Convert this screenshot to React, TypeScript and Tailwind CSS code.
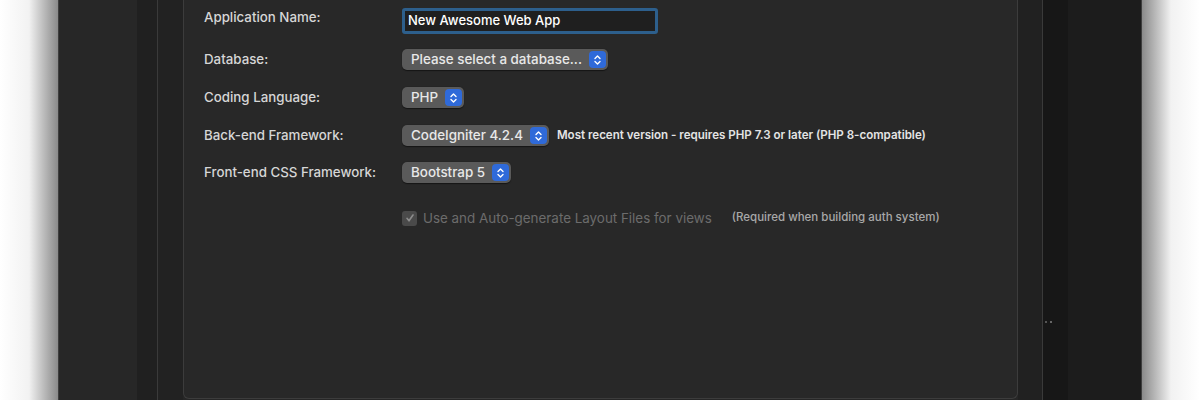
import React from 'react';

const font = { fontFamily: 'Inter, "Liberation Sans", Arial, sans-serif' };

const Chevrons = () => (
  <svg width="9" height="12" viewBox="0 0 9 12" fill="none" stroke="white" strokeWidth="1.4" strokeLinecap="round" strokeLinejoin="round">
    <path d="M2 4.5 L4.5 2 L7 4.5" />
    <path d="M2 7.5 L4.5 10 L7 7.5" />
  </svg>
);

const Select = ({ value }: { value: string }) => (
  <div className="flex h-[21px] items-center rounded-[5px] bg-[#5a5a5a] pl-[9px] pr-[2px] shadow-[0_0.5px_1px_rgba(0,0,0,0.5)]">
    <span className="text-[13.4px] font-medium leading-none text-[#e8e8e8]">{value}</span>
    <span className="ml-[7px] flex h-[17px] w-[17px] items-center justify-center rounded-[4px] bg-[#2f6ad9]">
      <Chevrons />
    </span>
  </div>
);

const Row = ({ label, children, className = '' }: { label: string; children: React.ReactNode; className?: string }) => (
  <div className={`flex items-center ${className}`}>
    <div className="w-[198px] shrink-0 text-[13.3px] font-medium text-[#d6d6d6]">{label}</div>
    {children}
  </div>
);

export default function App() {
  return (
    <div className="flex h-[400px] w-[1200px] overflow-hidden" style={font}>
      {/* left shadow */}
      <div className="w-[58px] shrink-0 bg-gradient-to-r from-white via-[#f2f2f2] to-[#8a8a8a]" />

      {/* window */}
      <div className="flex w-[1084px] shrink-0 border-x border-[#3e3e3e] bg-[#262626]">
        <div className="w-[78px] shrink-0 bg-[#272727]" />
        <div className="w-[20px] shrink-0 bg-[#202020]" />
        <div className="w-[1px] shrink-0 bg-[#3a3a3a]" />
        <div className="w-[25px] shrink-0 bg-[#222222]" />

        {/* form panel */}
        <div className="flex h-[399px] w-[835px] shrink-0 flex-col rounded-b-[6px] border-x border-b border-[#3c3c3c] bg-[#282828] pl-[20px] pt-[8px]">
          <Row label="Application Name:" className="items-start">
            <div className="flex h-[26px] w-[256px] items-center rounded-[3px] border-[3px] border-[#2d5f8c] bg-[#1f1f1f] pl-[3px] text-[13px] font-medium text-white">
              New Awesome Web App
            </div>
          </Row>
          <Row label="Database:" className="mt-[15px]">
            <Select value="Please select a database..." />
          </Row>
          <Row label="Coding Language:" className="mt-[17px]">
            <Select value="PHP" />
          </Row>
          <Row label="Back-end Framework:" className="mt-[17px]">
            <Select value="CodeIgniter 4.2.4" />
            <span className="ml-[8px] text-[11.55px] font-semibold text-[#e4e4e4]">
              Most recent version - requires PHP 7.3 or later (PHP 8-compatible)
            </span>
          </Row>
          <Row label="Front-end CSS Framework:" className="mt-[16px]">
            <Select value="Bootstrap 5" />
          </Row>
          <Row label="" className="mt-[25px]">
            <span className="flex h-[15px] w-[15px] items-center justify-center rounded-[3px] bg-[#4a4a4a]">
              <svg width="10" height="10" viewBox="0 0 10 10" fill="none" stroke="#8c8c8c" strokeWidth="1.6" strokeLinecap="round" strokeLinejoin="round">
                <path d="M2 5.3 L4 7.8 L8 2" />
              </svg>
            </span>
            <span className="ml-[6px] text-[13.4px] text-[#6c6c6c]">Use and Auto-generate Layout Files for views</span>
            <span className="ml-[20px] text-[11.5px] font-medium text-[#a8a8a8]">(Required when building auth system)</span>
          </Row>
        </div>

        <div className="w-[24px] shrink-0 bg-[#212121]" />
        <div className="w-[1px] shrink-0 bg-[#3a3a3a]" />
        <div className="relative w-[25px] shrink-0 bg-[#171717]">
          <div className="absolute left-[2px] top-[321px] flex gap-[3px]">
            <span className="h-[2px] w-[2px] bg-[#555]" />
            <span className="h-[2px] w-[2px] bg-[#666]" />
          </div>
        </div>
        <div className="flex-1 bg-[#1c1c1c]" />
      </div>

      {/* right shadow */}
      <div className="flex-1 bg-gradient-to-r from-[#8a8a8a] via-[#f2f2f2] to-white" />
    </div>
  );
}
